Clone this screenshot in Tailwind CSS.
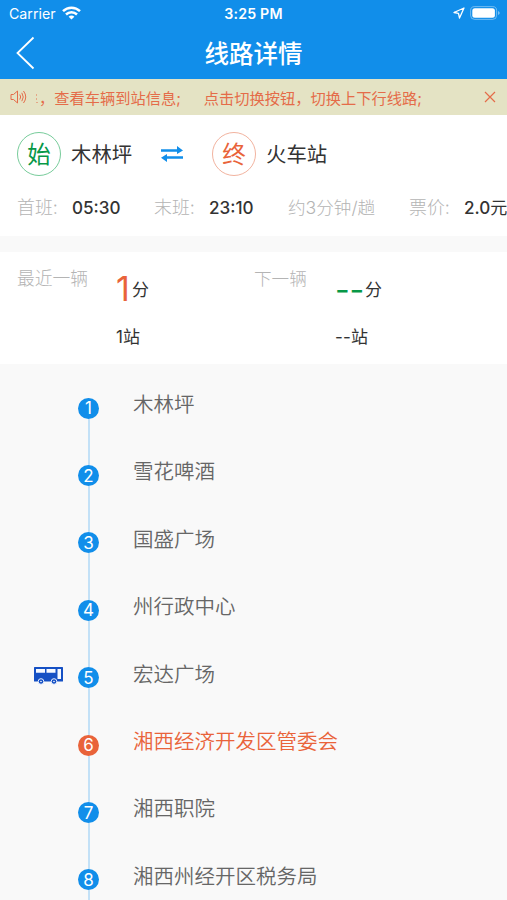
<!DOCTYPE html>
<html lang="zh-CN">
<head>
<meta charset="utf-8">
<title>线路详情</title>
<script src="https://cdn.jsdelivr.net/npm/@tailwindcss/browser@4"></script>
</head>
<body class="h-[900px] w-[507px] overflow-hidden bg-[#f9f9f9] font-['Inter','Noto_Sans_CJK_SC',sans-serif] text-[#333]">
<header class="h-[79px] bg-[#118eea] text-white">
  <div class="grid h-[28px] grid-cols-3 items-center px-[8px]">
    <div class="flex items-center gap-[6px] pl-px">
      <span class="text-[14.2px] leading-[28px]">Carrier</span>
      <svg class="-mt-[2px] h-[14px] w-[19px]" viewBox="0 0 19 14" fill="none" stroke="#fff" stroke-width="2.5"><path d="M1 5.2C5.8.6 13.2.6 18 5.2M4 8.5C7.1 5.5 11.9 5.5 15 8.5"/><path d="M9.5 13.6 6.6 10.7C8.2 9.2 10.8 9.2 12.4 10.7Z" fill="#fff" stroke="none"/></svg>
    </div>
    <span class="text-center text-[14.2px] leading-[28px] font-semibold tracking-[0.2px]">3:25 PM</span>
    <div class="-mt-[2px] flex items-center justify-end gap-[5px]">
      <svg class="h-[12px] w-[12px]" viewBox="0 0 12 12" fill="none" stroke="#fff" stroke-width="1.3" stroke-linejoin="round"><path d="M11 1 1 5.5 5.5 6.3 6.5 11Z"/></svg>
      <svg class="-mr-px h-[14px] w-[30px]" viewBox="0 0 30 14"><rect x=".6" y=".6" width="26" height="12.8" rx="4" fill="none" stroke="#fff" stroke-opacity=".4"/><rect x="2.3" y="2.3" width="22.6" height="9.4" rx="2.5" fill="#fff"/><path d="M28 5v4c1.3-.5 1.7-1.2 1.7-2S29.3 5.5 28 5Z" fill="#fff" fill-opacity=".45"/></svg>
    </div>
  </div>
  <div class="grid h-[50px] grid-cols-[60px_1fr_60px] items-center">
    <svg class="-mt-[2px] ml-[16px] h-[34px] w-[19px]" viewBox="0 0 19 34" fill="none" stroke="#fff" stroke-width="1.8"><path d="M17.5 1.5 1.5 17 17.5 32.5"/></svg>
    <h1 class="pt-px text-center text-[24.5px] leading-[50px] font-medium">线路详情</h1>
  </div>
</header>
<div class="flex h-[36px] items-center bg-[#e4e3c4] text-[15.25px] text-[#e46c49]">
  <svg class="ml-[10px] h-[14px] w-[17px] shrink-0" viewBox="0 0 17 14" fill="none" stroke="currentColor" stroke-width="1"><path d="M1 4.5H3.5L7.5 1V13L3.5 9.5H1ZM9.8 4.5Q11.6 7 9.8 9.5M11.8 2.8Q14.7 7 11.8 11.2M13.5 1Q18 7 13.5 13" stroke-linejoin="round"/></svg>
  <div class="mt-[4px] ml-[8px] flex w-[440px] overflow-hidden leading-[36px] whitespace-nowrap"><svg class="mt-[12px] h-[12px] w-[4px] shrink-0" viewBox="0 0 4 12" fill="currentColor" fill-opacity=".5"><path d="M1 1h1v2H1zM1 5h1v2H1zM1 9h2v1H1z"/></svg><span class="shrink-0">，查看车辆到站信息;</span><span class="ml-[23px] shrink-0">点击切换按钮，切换上下行线路;</span></div>
  <svg class="ml-[9px] h-[12px] w-[12px] shrink-0" viewBox="0 0 12 12" stroke="currentColor" stroke-width="1.2"><path d="M1 1 11 11M11 1 1 11"/></svg>
</div>
<section class="h-[121px] bg-white pt-[17px]">
  <div class="flex h-[44px] items-center pl-[17px] text-[20.4px] leading-[44px]">
    <span class="flex size-[44px] items-center justify-center rounded-full border border-[#78cc9b] pt-[2px] text-[23.5px] text-[#079847]">始</span>
    <span class="ml-[10px] w-[90px] pt-[1px]">木林坪</span>
    <svg class="h-[16px] w-[22px]" viewBox="0 0 22 16" fill="#118eea"><path d="M0 3.3H16V0L22 4.6 16 8V5.8H0ZM22 10.2H6V8L0 11.7 6 16V12.7H22Z"/></svg>
    <span class="ml-[29px] flex size-[44px] items-center justify-center rounded-full border border-[#f2b39f] pt-[2px] text-[23.5px] text-[#e9633a]">终</span>
    <span class="ml-[10px] pt-[1px]">火车站</span>
  </div>
  <div class="mt-[18px] grid h-[28px] grid-cols-[55px_82px_55px_79px_121px_55px_50px] pl-[17px] text-[17.1px] leading-[28px] font-medium whitespace-nowrap">
    <span class="text-[17.9px] font-light text-[#b4b4b4]">首班:</span><span>05:30</span>
    <span class="text-[17.9px] font-light text-[#b4b4b4]">末班:</span><span>23:10</span>
    <span class="text-[17.6px] font-light text-[#b4b4b4]">约3分钟/趟</span>
    <span class="text-[17.9px] font-light text-[#b4b4b4]">票价:</span><span>2.0<span class="font-normal">元</span></span>
  </div>
</section>
<section class="mt-[16px] grid h-[112px] grid-cols-[99px_138px_81px_1fr] bg-white pl-[17px] text-[17px]">
  <span class="pt-[13px] text-[17.8px] leading-[28px] font-light text-[#b4b4b4]">最近一辆</span>
  <div class="pt-[14px]">
    <div class="flex h-[46px]"><span class="w-[16px] text-[34px] leading-[46px] text-[#e9633a]">1</span><span class="leading-[49px]">分</span></div>
    <div class="mt-[11px] leading-[28px]">1站</div>
  </div>
  <span class="pt-[13px] text-[17.6px] leading-[28px] font-light text-[#b4b4b4]">下一辆</span>
  <div class="pt-[14px]">
    <div class="flex h-[46px]"><span class="flex w-[30px] text-[32px] leading-[48px] text-[#079847]"><span class="w-[14.6px]">-</span><span>-</span></span><span class="leading-[49px]">分</span></div>
    <div class="mt-[11px] flex leading-[28px]"><span class="w-[8px]">-</span><span class="w-[8px]">-</span><span>站</span></div>
  </div>
</section>
<main id="stations"></main>
<script>
const stations = ['木林坪', '雪花啤酒', '国盛广场', '州行政中心', '宏达广场', '湘西经济开发区管委会', '湘西职院', '湘西州经开区税务局'];
const bus = `<svg class="mt-[32px] h-[19px] w-[29px]" viewBox="0 0 29 19" fill="#1550c4"><rect y="1" width="29" height="14.5" rx=".5"/><path d="M2 3H11V6.8H2ZM12.5 3H21.5V6.8H12.5ZM23.5 3H27V13H23.5Z" fill="#f5f9ff"/><g stroke="#e9f0ff" stroke-width="1"><circle cx="7" cy="15.5" r="2.8"/><circle cx="20" cy="15.5" r="2.8"/></g><circle cx="7" cy="15.5" r=".8" fill="#fff"/><circle cx="20" cy="15.5" r=".8" fill="#fff"/></svg>`;
document.getElementById('stations').innerHTML = stations.map((name, i) => `
  <div class="grid h-[67.4px] grid-cols-[34px_44px_21px_34px_1fr]">
    <span></span>
    <div>${i === 4 ? bus : ''}</div>
    <div class="flex flex-col items-center">
      <div class="h-[33.7px] w-[2px] shrink-0 ${i === 0 ? '' : 'bg-[#c3e1f7]'}"></div>
      <div class="flex size-[21px] shrink-0 items-center justify-center rounded-full pt-[1px] text-[17px] leading-[21px] text-white ${i === 5 ? 'bg-[#e9633a]' : 'bg-[#118eea]'}">${i + 1}</div>
      <div class="w-[2px] flex-1 bg-[#c3e1f7]"></div>
    </div>
    <span></span>
    <span class="pt-[26px] text-[20.5px] leading-[30px] font-[350] whitespace-nowrap ${i === 5 ? 'text-[#e9633a]' : 'text-[#666]'}">${name}</span>
  </div>`).join('');
</script>
</body>
</html>
